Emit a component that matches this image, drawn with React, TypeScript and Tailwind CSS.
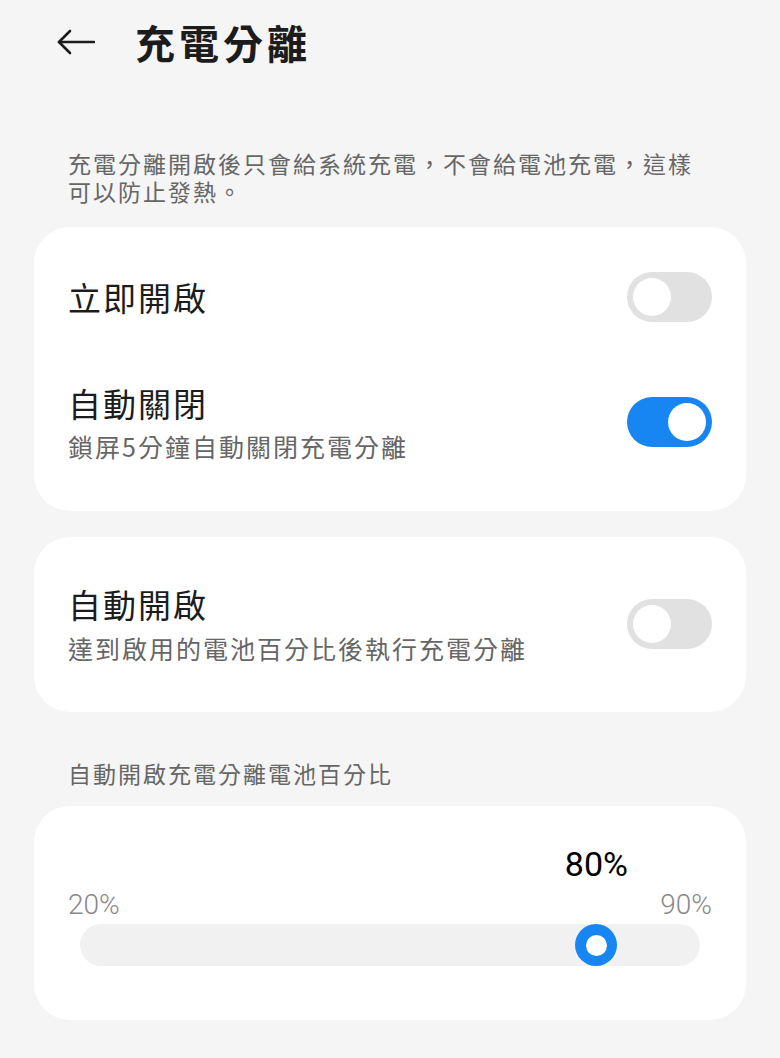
import { useState } from 'react'

const font = { fontFamily: '"Noto Sans CJK TC", "Noto Sans", sans-serif' }

function Toggle({ on, onClick }: { on: boolean; onClick: () => void }) {
  return (
    <button
      onClick={onClick}
      className={`relative w-[85px] h-[50px] rounded-full shrink-0 transition-colors ${on ? 'bg-[#1786f3]' : 'bg-[#e1e1e1]'}`}
    >
      <span
        className={`absolute top-[6px] w-[38px] h-[38px] rounded-full bg-white transition-all ${on ? 'left-[41px]' : 'left-[6px]'}`}
      />
    </button>
  )
}

export default function App() {
  const [now, setNow] = useState(false)
  const [autoOff, setAutoOff] = useState(true)
  const [autoOn, setAutoOn] = useState(false)
  const value = 80
  const min = 20
  const max = 90
  const pct = (value - min) / (max - min)

  return (
    <div className="w-[780px] h-[1058px] bg-[#f5f5f5] overflow-hidden" style={font}>
      <div className="h-[84px] flex items-center pl-[57px] gap-[40px]">
        <svg width="38" height="26" viewBox="0 0 38 26" fill="none" stroke="#1c1c1c" strokeWidth="2.6" strokeLinecap="round" strokeLinejoin="round">
          <path d="M2 13H37" />
          <path d="M13 2L2 13L13 24" />
        </svg>
        <h1 className="text-[40px] leading-none font-bold tracking-[4px] text-[#1c1c1c]">充電分離</h1>
      </div>

      <p className="mt-[65px] px-[68px] text-[23px] leading-[28px] tracking-[2px] text-[#666666]">
        充電分離開啟後只會給系統充電，不會給電池充電，這樣可以防止發熱。
      </p>

      <div className="mx-[34px] mt-[22px] bg-white rounded-[36px] px-[34px]">
        <div className="h-[140px] flex items-center justify-between">
          <span className="text-[33px] leading-[40px] tracking-[2px] text-[#1c1c1c]">立即開啟</span>
          <Toggle on={now} onClick={() => setNow(!now)} />
        </div>
        <div className="pt-[16px] pb-[50px] flex items-center justify-between">
          <div>
            <div className="text-[33px] leading-[40px] tracking-[2px] text-[#1c1c1c]">自動關閉</div>
            <div className="mt-[8px] text-[25px] leading-[30px] tracking-[2px] text-[#666666]">鎖屏5分鐘自動關閉充電分離</div>
          </div>
          <Toggle on={autoOff} onClick={() => setAutoOff(!autoOff)} />
        </div>
      </div>

      <div className="mx-[34px] mt-[26px] bg-white rounded-[36px] px-[34px] pt-[47px] pb-[49px] flex items-center justify-between">
        <div>
          <div className="text-[33px] leading-[40px] tracking-[2px] text-[#1c1c1c]">自動開啟</div>
          <div className="mt-[9px] text-[25px] leading-[30px] tracking-[2px] text-[#666666]">達到啟用的電池百分比後執行充電分離</div>
        </div>
        <Toggle on={autoOn} onClick={() => setAutoOn(!autoOn)} />
      </div>

      <div className="mt-[47px] px-[68px] text-[23px] leading-[28px] tracking-[2px] text-[#666666]">自動開啟充電分離電池百分比</div>

      <div className="mx-[34px] mt-[19px] bg-white rounded-[36px] px-[34px] pt-[41px] pb-[54px]">
        <div className="relative h-[34px]">
          <span
            className="absolute top-0 -translate-x-1/2 text-[34px] leading-[34px] text-black"
            style={{ fontFamily: 'Roboto, sans-serif', left: `calc(12px + 21px + ${pct} * (100% - 24px - 42px))` }}
          >
            {value}%
          </span>
        </div>
        <div className="mt-[9px] flex justify-between text-[28px] leading-[30px] text-[#888888] font-light" style={{ fontFamily: 'Roboto, sans-serif' }}>
          <span>{min}%</span>
          <span>{max}%</span>
        </div>
        <div className="relative mx-[12px] mt-[4px] h-[42px] rounded-full bg-[#f1f1f1]">
          <span
            className="absolute top-0 w-[42px] h-[42px] rounded-full bg-[#1786f3] flex items-center justify-center"
            style={{ left: `calc(${pct} * (100% - 42px))` }}
          >
            <span className="w-[21px] h-[21px] rounded-full bg-white" />
          </span>
        </div>
      </div>
    </div>
  )
}
